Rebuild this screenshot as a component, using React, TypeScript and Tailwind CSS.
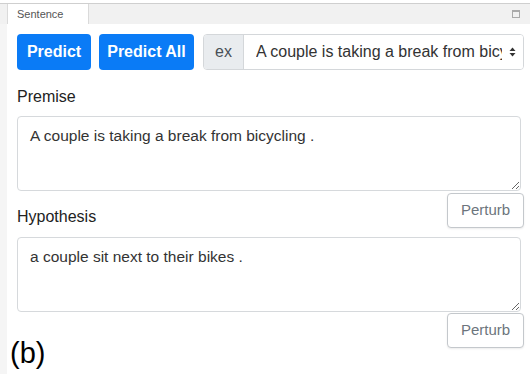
import { useState } from "react";

const font = { fontFamily: '"Liberation Sans", Arial, sans-serif' };

const PerturbButton = () => (
  <button className="h-[35px] w-[77px] shrink-0 rounded-[4px] border border-[#c4c8cc] bg-white text-[15px] text-[#6c757d] shadow-[0_1px_2px_rgba(0,0,0,0.08)]">
    Perturb
  </button>
);

const App = () => {
  const [premise, setPremise] = useState("A couple is taking a break from bicycling .");
  const [hypothesis, setHypothesis] = useState("a couple sit next to their bikes .");

  return (
    <div className="w-[530px] h-[374px] bg-white pt-[3px] overflow-hidden" style={font}>
      {/* Tab strip */}
      <div className="flex h-[21px] items-stretch border-t border-[#cfcfcf] bg-[#f1f1f1]">
        <div className="ml-[7px] flex w-[82px] items-center border-x border-[#dadada] bg-white pl-[9px] text-[11px] text-[#555]">
          Sentence
        </div>
        <div className="flex-1" />
        <div className="mr-[10px] mt-[6px] h-[8px] w-[8px] border border-[#aaa] border-t-2" />
      </div>

      <div className="flex h-[350px]">
        <div className="w-[7px] shrink-0 bg-[#f5f5f5]" />
        <div className="flex min-w-0 flex-1 flex-col pl-[10px] pr-[6px] pt-[10px]">
          {/* Action row */}
          <div className="flex h-[36px] items-stretch">
            <button className="w-[74px] shrink-0 rounded-[4px] bg-[#0a7bf6] text-[16px] font-bold text-white">
              Predict
            </button>
            <button className="ml-[8px] w-[95px] shrink-0 rounded-[4px] bg-[#0a7bf6] text-[16px] font-bold text-white">
              Predict All
            </button>
            <div className="ml-[9px] flex min-w-0 flex-1 overflow-hidden rounded-[4px] border border-[#d4d7da]">
              <div className="flex w-[40px] shrink-0 items-center justify-center border-r border-[#d4d7da] bg-[#e9ecef] text-[16px] text-[#495057]">
                ex
              </div>
              <div className="flex min-w-0 flex-1 items-center bg-white pl-[12px] pr-[7px] text-[16px] text-[#333]">
                <span className="w-[246px] overflow-hidden whitespace-nowrap">
                  A couple is taking a break from bicycling .
                </span>
                <svg className="ml-auto shrink-0" width="7" height="10" viewBox="0 0 7 10">
                  <path d="M3.5 0.5 L6.5 4 H0.5 Z" fill="#333" />
                  <path d="M3.5 9.5 L6.5 6 H0.5 Z" fill="#333" />
                </svg>
              </div>
            </div>
          </div>

          {/* Premise */}
          <label className="mt-[17px] text-[16px] leading-[20px] text-[#222]">Premise</label>
          <textarea
            value={premise}
            onChange={(e) => setPremise(e.target.value)}
            className="mt-[9px] h-[75px] w-[504px] resize-y rounded-[4px] border border-[#d6d9dc] px-[12px] py-[8px] text-[15.5px] leading-[22px] text-[#333] outline-none"
          />
          <div className="mt-[2px] flex items-end justify-between">
            <label className="mb-[1px] text-[16px] leading-[20px] text-[#222]">Hypothesis</label>
            <PerturbButton />
          </div>
          <textarea
            value={hypothesis}
            onChange={(e) => setHypothesis(e.target.value)}
            className="mt-[9px] h-[75px] w-[504px] resize-y rounded-[4px] border border-[#d6d9dc] px-[12px] py-[8px] text-[15.5px] leading-[22px] text-[#333] outline-none"
          />
          <div className="-ml-[7px] mt-[1px] flex items-start justify-between">
            <span className="mt-[23px] text-[29px] leading-[34px] text-black">(b)</span>
            <PerturbButton />
          </div>
        </div>
      </div>
    </div>
  );
};

export default App;
